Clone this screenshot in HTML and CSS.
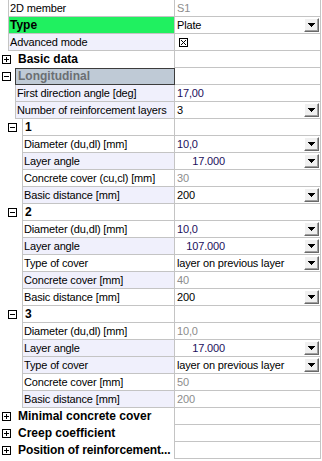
FILE: index.html
```html
<!DOCTYPE html>
<html lang="en">
  <head>
    <meta charset="UTF-8" />
    <title>2D member properties</title>
    <link rel="stylesheet" href="styles.css">
  </head>
  <body>
    <div class="grid">
      <div class="row">
        <div class="lead l0"></div>
        <div class="name">2D member</div>
        <div class="val"><span class="ro">S1</span></div>
      </div>
      <div class="row">
        <div class="lead l0"></div>
        <div class="name key">Type</div>
        <div class="val"><span>Plate</span><span class="dd"><svg width="7" height="4"><path d="M0 0H7V1H6V2H5V3H4V4H3V3H2V2H1V1H0Z"/></svg></span></div>
      </div>
      <div class="row">
        <div class="lead l0"></div>
        <div class="name alt">Advanced mode</div>
        <div class="val"><svg class="check" width="9" height="9"><rect x=".5" y=".5" width="8" height="8" fill="#fff" stroke="#000"/><path d="M2 2L7 7M7 2L2 7" stroke="#000"/></svg></div>
      </div>

      <div class="row">
        <div class="lead cat"><svg width="9" height="9"><rect x=".5" y=".5" width="8" height="8" fill="#fff" stroke="#000"/><path d="M2 4.5H7M4.5 2V7" stroke="#000"/></svg></div>
        <div class="name head">Basic data</div>
        <div class="val"></div>
      </div>
      <div class="row">
        <div class="lead cat"><svg width="9" height="9"><rect x=".5" y=".5" width="8" height="8" fill="#fff" stroke="#000"/><path d="M2 4.5H7" stroke="#000"/></svg></div>
        <div class="name head selected">Longitudinal</div>
        <div class="val nol"></div>
      </div>
      <div class="row">
        <div class="lead l1"></div>
        <div class="name alt">First direction angle [deg]</div>
        <div class="val"><span class="num">17,00</span></div>
      </div>
      <div class="row">
        <div class="lead l1"></div>
        <div class="name alt">Number of reinforcement layers</div>
        <div class="val"><span>3</span><span class="dd"><svg width="7" height="4"><path d="M0 0H7V1H6V2H5V3H4V4H3V3H2V2H1V1H0Z"/></svg></span></div>
      </div>

      <div class="row">
        <div class="lead grp"><svg width="9" height="9"><rect x=".5" y=".5" width="8" height="8" fill="#fff" stroke="#000"/><path d="M2 4.5H7" stroke="#000"/></svg></div>
        <div class="name layer">1</div>
        <div class="val"></div>
      </div>
      <div class="row">
        <div class="lead l2"></div>
        <div class="name">Diameter (du,dl) [mm]</div>
        <div class="val"><span class="num">10,0</span><span class="dd"><svg width="7" height="4"><path d="M0 0H7V1H6V2H5V3H4V4H3V3H2V2H1V1H0Z"/></svg></span></div>
      </div>
      <div class="row">
        <div class="lead l2"></div>
        <div class="name alt">Layer angle</div>
        <div class="val"><span class="num angle">17.000</span><span class="dd"><svg width="7" height="4"><path d="M0 0H7V1H6V2H5V3H4V4H3V3H2V2H1V1H0Z"/></svg></span></div>
      </div>
      <div class="row">
        <div class="lead l2"></div>
        <div class="name">Concrete cover (cu,cl) [mm]</div>
        <div class="val"><span class="ro">30</span></div>
      </div>
      <div class="row">
        <div class="lead l2"></div>
        <div class="name alt">Basic distance [mm]</div>
        <div class="val"><span>200</span><span class="dd"><svg width="7" height="4"><path d="M0 0H7V1H6V2H5V3H4V4H3V3H2V2H1V1H0Z"/></svg></span></div>
      </div>

      <div class="row">
        <div class="lead grp"><svg width="9" height="9"><rect x=".5" y=".5" width="8" height="8" fill="#fff" stroke="#000"/><path d="M2 4.5H7" stroke="#000"/></svg></div>
        <div class="name layer">2</div>
        <div class="val"></div>
      </div>
      <div class="row">
        <div class="lead l2"></div>
        <div class="name">Diameter (du,dl) [mm]</div>
        <div class="val"><span class="num">10,0</span><span class="dd"><svg width="7" height="4"><path d="M0 0H7V1H6V2H5V3H4V4H3V3H2V2H1V1H0Z"/></svg></span></div>
      </div>
      <div class="row">
        <div class="lead l2"></div>
        <div class="name alt">Layer angle</div>
        <div class="val"><span class="num angle">107.000</span><span class="dd"><svg width="7" height="4"><path d="M0 0H7V1H6V2H5V3H4V4H3V3H2V2H1V1H0Z"/></svg></span></div>
      </div>
      <div class="row">
        <div class="lead l2"></div>
        <div class="name">Type of cover</div>
        <div class="val"><span>layer on previous layer</span><span class="dd"><svg width="7" height="4"><path d="M0 0H7V1H6V2H5V3H4V4H3V3H2V2H1V1H0Z"/></svg></span></div>
      </div>
      <div class="row">
        <div class="lead l2"></div>
        <div class="name alt">Concrete cover [mm]</div>
        <div class="val"><span class="ro">40</span></div>
      </div>
      <div class="row">
        <div class="lead l2"></div>
        <div class="name">Basic distance [mm]</div>
        <div class="val"><span>200</span><span class="dd"><svg width="7" height="4"><path d="M0 0H7V1H6V2H5V3H4V4H3V3H2V2H1V1H0Z"/></svg></span></div>
      </div>

      <div class="row">
        <div class="lead grp"><svg width="9" height="9"><rect x=".5" y=".5" width="8" height="8" fill="#fff" stroke="#000"/><path d="M2 4.5H7" stroke="#000"/></svg></div>
        <div class="name layer">3</div>
        <div class="val"></div>
      </div>
      <div class="row">
        <div class="lead l2"></div>
        <div class="name">Diameter (du,dl) [mm]</div>
        <div class="val"><span class="ro">10,0</span></div>
      </div>
      <div class="row">
        <div class="lead l2"></div>
        <div class="name alt">Layer angle</div>
        <div class="val"><span class="num angle">17.000</span><span class="dd"><svg width="7" height="4"><path d="M0 0H7V1H6V2H5V3H4V4H3V3H2V2H1V1H0Z"/></svg></span></div>
      </div>
      <div class="row">
        <div class="lead l2"></div>
        <div class="name alt">Type of cover</div>
        <div class="val"><span>layer on previous layer</span><span class="dd"><svg width="7" height="4"><path d="M0 0H7V1H6V2H5V3H4V4H3V3H2V2H1V1H0Z"/></svg></span></div>
      </div>
      <div class="row">
        <div class="lead l2"></div>
        <div class="name">Concrete cover [mm]</div>
        <div class="val"><span class="ro">50</span></div>
      </div>
      <div class="row">
        <div class="lead l2"></div>
        <div class="name alt">Basic distance [mm]</div>
        <div class="val"><span class="ro">200</span></div>
      </div>

      <div class="row">
        <div class="lead cat"><svg width="9" height="9"><rect x=".5" y=".5" width="8" height="8" fill="#fff" stroke="#000"/><path d="M2 4.5H7M4.5 2V7" stroke="#000"/></svg></div>
        <div class="name head">Minimal concrete cover</div>
        <div class="val"></div>
      </div>
      <div class="row">
        <div class="lead cat"><svg width="9" height="9"><rect x=".5" y=".5" width="8" height="8" fill="#fff" stroke="#000"/><path d="M2 4.5H7M4.5 2V7" stroke="#000"/></svg></div>
        <div class="name head">Creep coefficient</div>
        <div class="val"></div>
      </div>
      <div class="row">
        <div class="lead cat"><svg width="9" height="9"><rect x=".5" y=".5" width="8" height="8" fill="#fff" stroke="#000"/><path d="M2 4.5H7M4.5 2V7" stroke="#000"/></svg></div>
        <div class="name head tight">Position of reinforcement...</div>
        <div class="val"></div>
      </div>
    </div>
  </body>
</html>
```

FILE: styles.css
```css
body {
  margin: 0;
  background: #fff;
  color: #000;
  font-family: "Liberation Sans", Arial, sans-serif;
  font-size: 11px;
}
.grid {
  width: 321px;
}
.row {
  display: flex;
  height: 17px;
}
.lead {
  flex: none;
  display: flex;
  align-items: center;
}
.l0 {
  width: 8px;
}
.l1 {
  width: 15px;
}
.l2 {
  width: 22px;
}
.cat {
  width: 15px;
  padding-left: 2px;
  box-sizing: border-box;
}
.grp {
  width: 22px;
  padding-left: 8px;
  box-sizing: border-box;
}
.lead svg {
  display: block;
}
.name {
  flex: 1;
  min-width: 0;
  border-left: 1px solid #c4c4c4;
  border-bottom: 1px solid #c4c4c4;
  padding-left: 1px;
  line-height: 16px;
  letter-spacing: -0.15px;
  white-space: nowrap;
  overflow: hidden;
}
.alt {
  background: #f0f0fc;
}
.key {
  background: #20f060;
  font-weight: bold;
  font-size: 12px;
  letter-spacing: 0;
}
.head {
  border: none;
  padding-left: 3px;
  font-weight: bold;
  font-size: 12px;
  letter-spacing: 0;
}
.tight {
  letter-spacing: -0.1px;
}
.selected {
  box-sizing: border-box;
  border: 1px solid #3c3c3c;
  padding-left: 2px;
  background: #bfcad6;
  color: #6b6f73;
  line-height: 15px;
}
.layer {
  padding-left: 2px;
  font-weight: bold;
  font-size: 12px;
}
.val {
  flex: none;
  box-sizing: border-box;
  width: 147px;
  display: flex;
  align-items: center;
  padding-left: 2px;
  border-left: 1px solid #c4c4c4;
  border-right: 1px solid #c4c4c4;
  border-bottom: 1px solid #c4c4c4;
  white-space: nowrap;
  letter-spacing: -0.15px;
}
.nol {
  width: 146px;
  border-left: none;
}
.ro {
  color: #8c8c8c;
}
.num {
  color: #1c0f5c;
}
.angle {
  width: 48px;
  text-align: right;
}
.check {
  display: block;
  margin-left: 2px;
}
.dd {
  margin-left: auto;
  margin-right: 1px;
  box-sizing: border-box;
  width: 15px;
  height: 14px;
  display: flex;
  align-items: center;
  justify-content: center;
  background: #f0f0f0;
  border-top: 1px solid #fff;
  border-left: 1px solid #fff;
  border-right: 1px solid #696969;
  border-bottom: 1px solid #696969;
  box-shadow: inset -1px -1px #a0a0a0;
}
.dd svg {
  display: block;
}
```
